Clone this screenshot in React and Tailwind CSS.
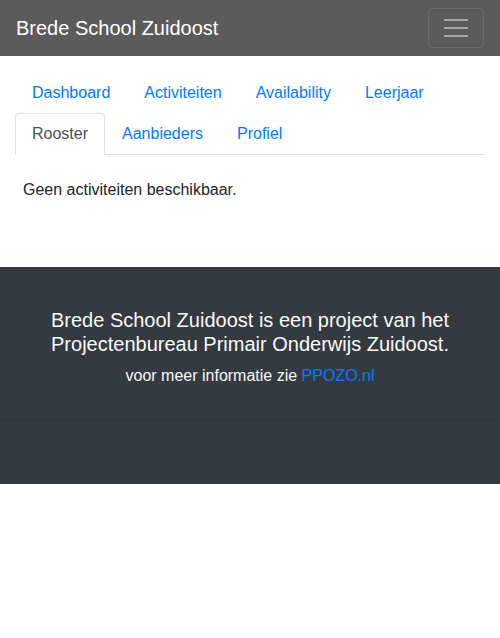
export default function App() {
  const row1 = ["Dashboard", "Activiteiten", "Availability", "Leerjaar"];
  const row2 = ["Aanbieders", "Profiel"];
  return (
    <div className="font-['Liberation_Sans',Arial,sans-serif] text-[16px] leading-[24px] text-[#212529] bg-white">
      <nav className="h-[56px] bg-[#5b5b5b] flex items-center justify-between px-4">
        <a className="text-[20px] leading-[30px] text-white">Brede School Zuidoost</a>
        <button className="w-[56px] h-[40px] border border-white/10 rounded-[4px] flex flex-col items-center justify-center gap-[6px]">
          <span className="block w-[24px] h-[2px] bg-[#a9a9a9]"></span>
          <span className="block w-[24px] h-[2px] bg-[#a9a9a9]"></span>
          <span className="block w-[24px] h-[2px] bg-[#a9a9a9]"></span>
        </button>
      </nav>
      <div className="px-[15px] pt-4">
        <ul className="flex flex-wrap border-b border-[#dee2e6]">
          {row1.map((t) => (
            <li key={t} className="-mb-px">
              <a className="block px-4 py-2 border border-transparent text-[#007bff]">{t}</a>
            </li>
          ))}
          <li className="-mb-px">
            <a className="block px-4 py-2 border border-[#dee2e6] border-b-white rounded-t-[4px] bg-white text-[#495057]">Rooster</a>
          </li>
          {row2.map((t) => (
            <li key={t} className="-mb-px">
              <a className="block px-4 py-2 border border-transparent text-[#007bff]">{t}</a>
            </li>
          ))}
        </ul>
        <div className="mt-[15px] p-2 mb-[57px]">
          <p>Geen activiteiten beschikbaar.</p>
        </div>
      </div>
      <footer className="bg-[#343a40] text-[#f8f9fa]">
        <div className="pt-[41px] pb-[31px] text-center">
          <p className="text-[20px] leading-[24px] px-12">Brede School Zuidoost is een project van het Projectenbureau Primair Onderwijs Zuidoost.</p>
          <p className="mt-2">
            voor meer informatie zie <a className="text-[#007bff]">PPOZO.nl</a>
          </p>
        </div>
        <div className="border-t border-[#2e3338] h-[65px]"></div>
      </footer>
    </div>
  );
}
